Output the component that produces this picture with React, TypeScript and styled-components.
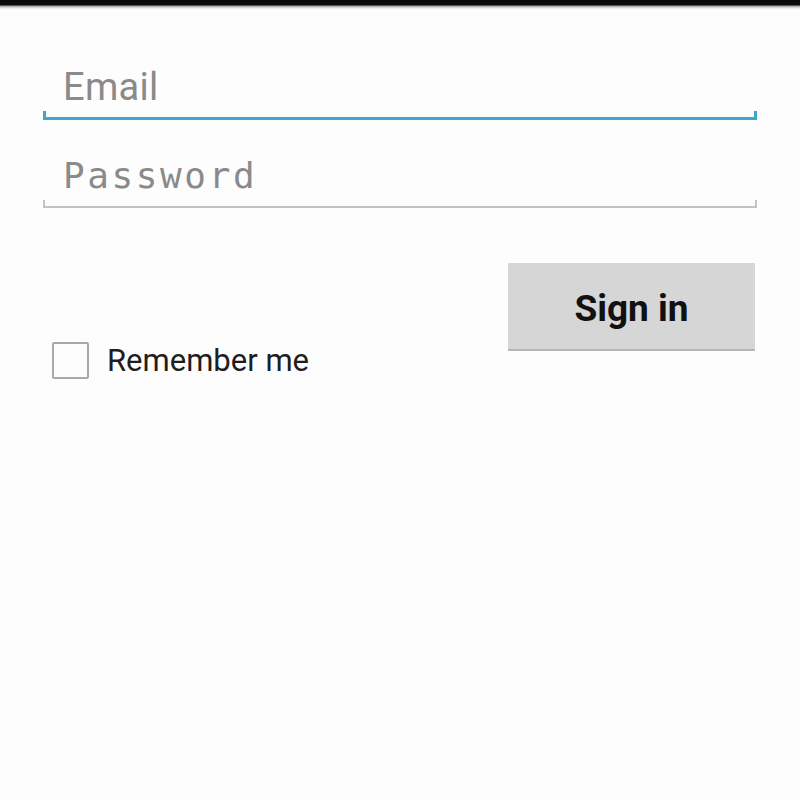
import React from 'react'
import styled, { createGlobalStyle } from 'styled-components'

const GlobalStyle = createGlobalStyle`
  html, body {
    margin: 0;
    padding: 0;
    background: #fdfdfd;
  }
`

const Screen = styled.div`
  width: 800px;
  height: 800px;
  display: flex;
  flex-direction: column;
  background: #fdfdfd;
  overflow: hidden;
`

const StatusEdge = styled.div`
  height: 10px;
  flex-shrink: 0;
  background: linear-gradient(
    to bottom,
    #050505 0,
    #0a0a0a 5px,
    #9a9a9a 6px,
    #e6e6e6 8px,
    #fdfdfd 10px
  );
`

const Form = styled.form`
  display: flex;
  flex-direction: column;
  padding: 47px 43px 0 43px;
`

const Field = styled.div<{ $focused?: boolean }>`
  position: relative;
  margin-top: ${(p) => (p.$focused ? '0' : '26px')};
  border-bottom: ${(p) => (p.$focused ? '3px solid #3fa6cf' : '2px solid #c2c2c2')};

  &::before,
  &::after {
    content: '';
    position: absolute;
    bottom: 0;
    width: ${(p) => (p.$focused ? '3px' : '2px')};
    height: 6px;
    background: ${(p) => (p.$focused ? '#3fa6cf' : '#c2c2c2')};
  }

  &::before {
    left: 0;
  }

  &::after {
    right: 0;
  }
`

const Input = styled.input<{ $mono?: boolean }>`
  display: block;
  box-sizing: border-box;
  width: 100%;
  height: 60px;
  margin: 0;
  padding: 0 0 0 20px;
  border: none;
  outline: none;
  background: transparent;
  font-family: ${(p) =>
    p.$mono ? '"DejaVu Sans Mono", "Liberation Mono", monospace' : 'Roboto, "Noto Sans", sans-serif'};
  font-size: ${(p) => (p.$mono ? '36px' : '38px')};
  letter-spacing: ${(p) => (p.$mono ? '2.6px' : '0.3px')};
  line-height: 60px;
  color: #333;

  &::placeholder {
    color: #8a8a8a;
    opacity: 1;
  }
`

const Actions = styled.div`
  display: flex;
  justify-content: space-between;
  align-items: flex-start;
  margin-top: 55px;
`

const Remember = styled.label`
  display: flex;
  align-items: center;
  gap: 18px;
  margin: 79px 0 0 9px;
  font-family: Roboto, 'Noto Sans', sans-serif;
  font-size: 31px;
  color: #1e1e1e;
`

const Box = styled.span`
  box-sizing: border-box;
  width: 37px;
  height: 37px;
  border: 2px solid #a9a9a9;
  border-radius: 2px;
  background: #fdfdfd;
`

const SignIn = styled.button`
  box-sizing: border-box;
  width: 247px;
  height: 88px;
  margin-right: 2px;
  padding: 4px 0 0 0;
  border: none;
  border-bottom: 2px solid #b4b4b4;
  border-radius: 1px;
  background: #d6d6d6;
  font-family: Roboto, 'Noto Sans', sans-serif;
  font-weight: 700;
  font-size: 37px;
  color: #111;
  cursor: pointer;
`

const App: React.FC = () => {
  return (
    <Screen>
      <GlobalStyle />
      <StatusEdge />
      <Form onSubmit={(e) => e.preventDefault()}>
        <Field $focused>
          <Input type="email" placeholder="Email" />
        </Field>
        <Field>
          <Input type="password" placeholder="Password" $mono />
        </Field>
        <Actions>
          <Remember>
            <Box />
            Remember me
          </Remember>
          <SignIn type="submit">Sign in</SignIn>
        </Actions>
      </Form>
    </Screen>
  )
}

export default App
